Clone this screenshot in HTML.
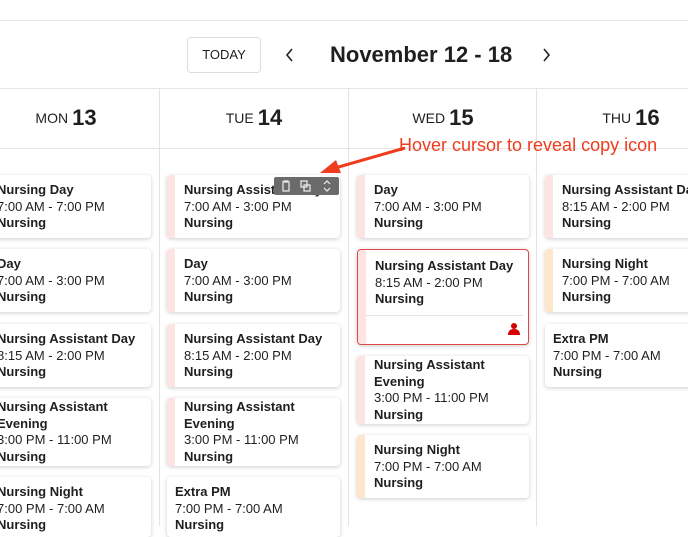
<!DOCTYPE html>
<html><head><style>
body{margin:0;width:688px;height:526px;overflow:hidden;background:#fff;font-family:"Liberation Sans",sans-serif;color:#1f1f1f;position:relative}
.a{position:absolute}
.hl{position:absolute;left:0;width:688px;height:1px;background:#e6e6e6}
.vl{position:absolute;top:88px;height:438px;width:1px;background:#e3e3e3}
.card{position:absolute;background:#fff;border-radius:4px;box-shadow:0 1px 4px rgba(0,0,0,.2);overflow:hidden;font-size:13px;line-height:16.5px;box-sizing:border-box;padding:7px 0 0 17px}
.card.f{padding-top:1px}
.card:before{content:"";position:absolute;left:0;top:0;bottom:0;width:8px;background:#fde3e1}
.card.n:before{background:#fde6c9}
.card.x:before{display:none}
.card b{font-weight:bold;display:block;white-space:nowrap}
.card span{display:block;white-space:nowrap}
.dh{position:absolute;top:105px;font-size:14px;text-align:center;width:188px}
.dh b{font-size:22px;font-weight:bold;margin-left:4px;vertical-align:-2px}
</style></head><body>
<div class="hl" style="top:20px"></div>
<div class="hl" style="top:88px"></div>
<div class="hl" style="top:148px"></div>
<div class="vl" style="left:159px"></div>
<div class="vl" style="left:348px"></div>
<div class="vl" style="left:536px"></div>
<div class="a" style="left:187px;top:37px;width:72px;height:34px;border:1px solid #ddd;border-radius:4px;font-size:13px;text-align:center;line-height:34px">TODAY</div>
<svg class="a" style="left:285px;top:47px" width="10" height="16" fill="none" stroke="#222" stroke-width="1.6"><path d="M7 2L2 8l5 6"/></svg>
<div class="a" style="left:330px;top:42px;font-size:22px;font-weight:bold">November 12 - 18</div>
<svg class="a" style="left:542px;top:47px" width="10" height="16" fill="none" stroke="#222" stroke-width="1.6"><path d="M2 2l5 6-5 6"/></svg>
<div class="dh" style="left:-28px">MON<b>13</b></div>
<div class="dh" style="left:160px">TUE<b>14</b></div>
<div class="dh" style="left:349px">WED<b>15</b></div>
<div class="dh" style="left:537px">THU<b>16</b></div>

<div class="card" style="left:-20px;top:175px;width:171px;height:63px"><b>Nursing Day</b><span>7:00 AM - 7:00 PM</span><b>Nursing</b></div>
<div class="card" style="left:-20px;top:249px;width:171px;height:63px"><b>Day</b><span>7:00 AM - 3:00 PM</span><b>Nursing</b></div>
<div class="card" style="left:-20px;top:324px;width:171px;height:63px"><b>Nursing Assistant Day</b><span>8:15 AM - 2:00 PM</span><b>Nursing</b></div>
<div class="card f" style="left:-20px;top:398px;width:171px;height:68px"><b>Nursing Assistant</b><b>Evening</b><span>3:00 PM - 11:00 PM</span><b>Nursing</b></div>
<div class="card n" style="left:-20px;top:477px;width:171px;height:60px"><b>Nursing Night</b><span>7:00 PM - 7:00 AM</span><b>Nursing</b></div>

<div class="card" style="left:167px;top:175px;width:173px;height:63px"><b>Nursing Assistant Day</b><span>7:00 AM - 3:00 PM</span><b>Nursing</b></div>
<div class="card" style="left:167px;top:249px;width:173px;height:63px"><b>Day</b><span>7:00 AM - 3:00 PM</span><b>Nursing</b></div>
<div class="card" style="left:167px;top:324px;width:173px;height:63px"><b>Nursing Assistant Day</b><span>8:15 AM - 2:00 PM</span><b>Nursing</b></div>
<div class="card f" style="left:167px;top:398px;width:173px;height:68px"><b>Nursing Assistant</b><b>Evening</b><span>3:00 PM - 11:00 PM</span><b>Nursing</b></div>
<div class="card x" style="left:167px;top:477px;width:173px;height:60px;padding-left:8px"><b>Extra PM</b><span>7:00 PM - 7:00 AM</span><b>Nursing</b></div>
<div class="a" style="left:274px;top:177px;width:65px;height:18px;background:#6b6b6b;border-radius:2px"></div>
<svg class="a" style="left:274px;top:177px" width="65" height="18" fill="none" stroke="#eee" stroke-width="1.2"><path d="M8 5h8M10 5v-1h4v1M9 6v8h6V6"/><path d="M27 4h6v6h-6z M30 8h6v6h-6z"/><path d="M50 7l3-3 3 3M50 11l3 3 3-3"/></svg>

<div class="card" style="left:357px;top:175px;width:172px;height:63px"><b>Day</b><span>7:00 AM - 3:00 PM</span><b>Nursing</b></div>
<div class="card" style="left:357px;top:249px;width:172px;height:96px;border:1.5px solid #e04848;padding-top:8px"><b>Nursing Assistant Day</b><span>8:15 AM - 2:00 PM</span><b>Nursing</b>
<div class="a" style="left:8px;right:5px;top:65px;height:1px;background:#e5e5e5"></div>
<svg class="a" style="left:150px;top:72px" width="12" height="13" fill="#d40000"><circle cx="6" cy="4" r="3"/><path d="M0 13c0-4 2-6 6-6s6 2 6 6z"/></svg></div>
<div class="card f" style="left:357px;top:356px;width:172px;height:68px"><b>Nursing Assistant</b><b>Evening</b><span>3:00 PM - 11:00 PM</span><b>Nursing</b></div>
<div class="card n" style="left:357px;top:435px;width:172px;height:63px"><b>Nursing Night</b><span>7:00 PM - 7:00 AM</span><b>Nursing</b></div>

<div class="card" style="left:545px;top:175px;width:160px;height:63px"><b>Nursing Assistant Day</b><span>8:15 AM - 2:00 PM</span><b>Nursing</b></div>
<div class="card n" style="left:545px;top:249px;width:160px;height:63px"><b>Nursing Night</b><span>7:00 PM - 7:00 AM</span><b>Nursing</b></div>
<div class="card x" style="left:545px;top:324px;width:160px;height:63px;padding-left:8px"><b>Extra PM</b><span>7:00 PM - 7:00 AM</span><b>Nursing</b></div>

<div class="a" style="left:399px;top:135px;font-size:18px;color:#f03c1e">Hover cursor to reveal copy icon</div>
<svg class="a" style="left:310px;top:140px" width="100" height="40"><line x1="95" y1="8" x2="25" y2="28" stroke="#f03c1e" stroke-width="3"/><path d="M10 33L26 20L31 33z" fill="#f03c1e"/></svg>
</body></html>
